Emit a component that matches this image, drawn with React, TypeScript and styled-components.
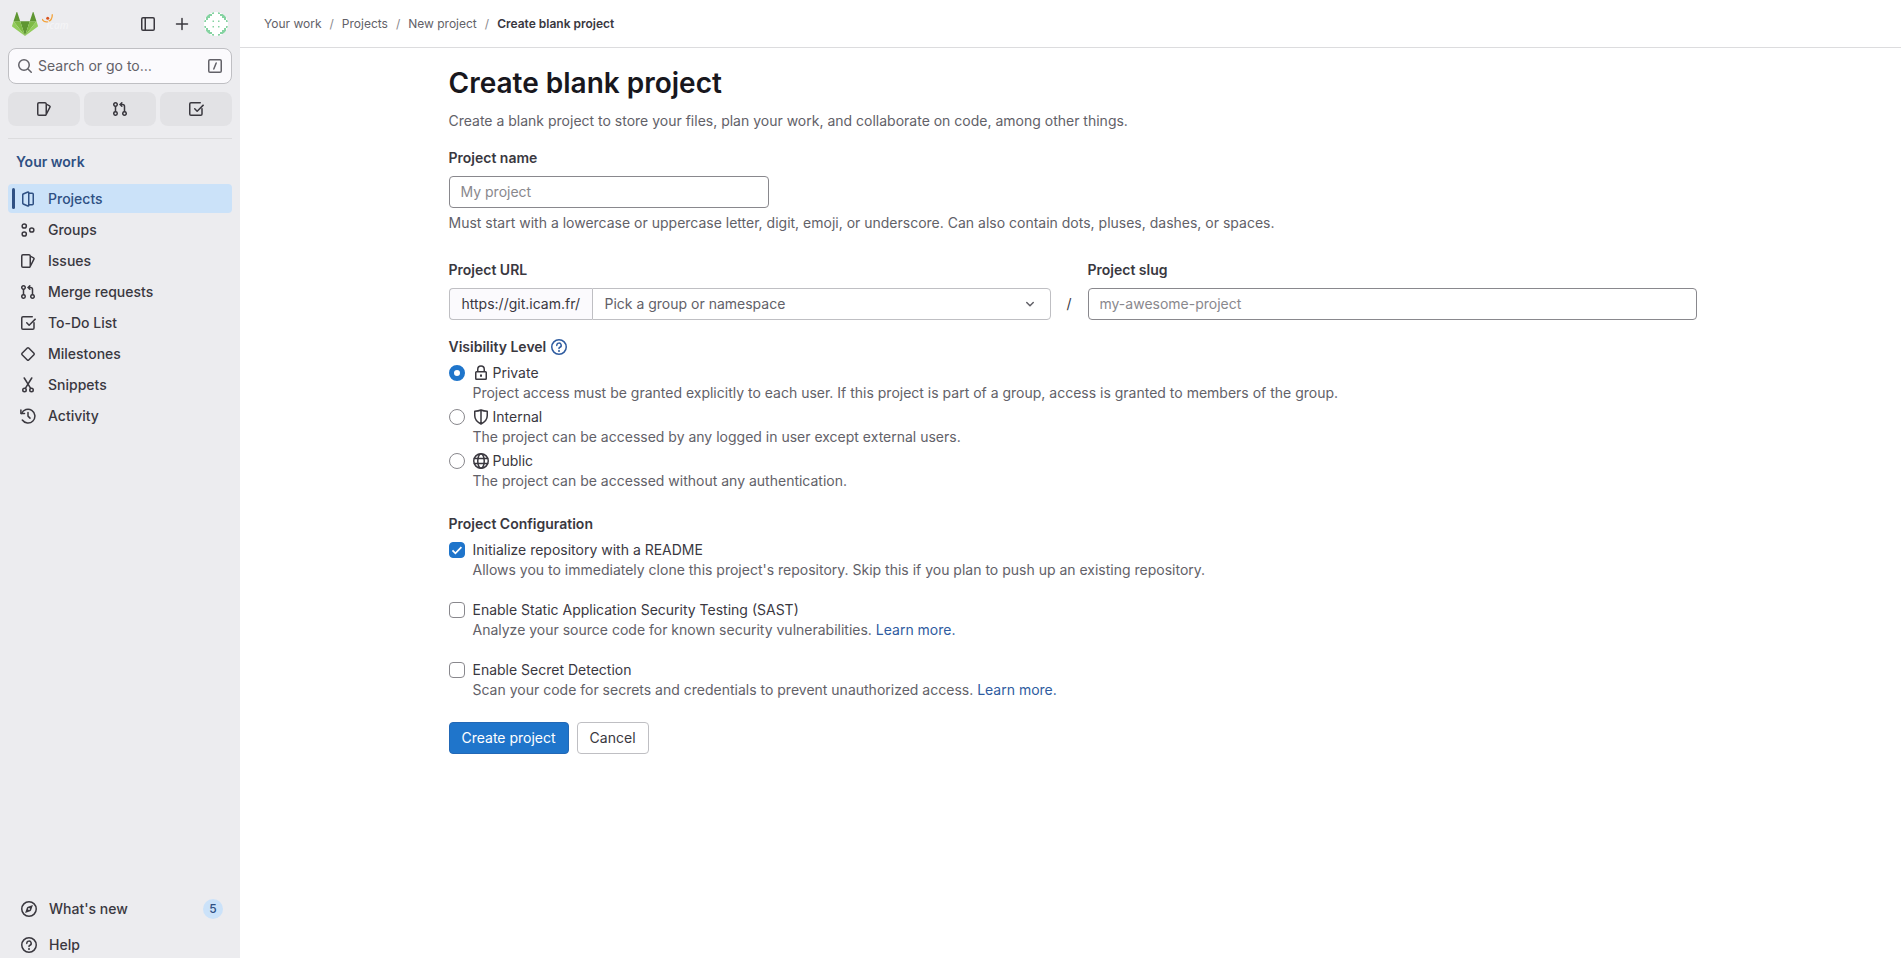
import React from 'react';
import styled, { createGlobalStyle, css } from 'styled-components';

const GlobalStyle = createGlobalStyle`
  *, *::before, *::after { box-sizing: border-box; }
  html, body { margin: 0; padding: 0; background: #fff; }
  body, button, input, select {
    font-family: Inter, "Liberation Sans", sans-serif;
    font-size: 14px;
    line-height: 20px;
    color: #3a383f;
  }
  h1, h2, p, ul, ol, fieldset { margin: 0; padding: 0; border: 0; list-style: none; }
`;

/* ---------- icons ---------- */

const Glyph = styled.svg`
  display: block;
  flex: none;
  width: 16px;
  height: 16px;
`;

const solid = (d: string) => (
  <Glyph viewBox="0 0 16 16" aria-hidden="true">
    <path d={d} fill="currentColor" fillRule="evenodd" clipRule="evenodd" />
  </Glyph>
);

const line = (children: React.ReactNode) => (
  <Glyph
    viewBox="0 0 16 16"
    fill="none"
    stroke="currentColor"
    strokeWidth="1.5"
    strokeLinecap="round"
    strokeLinejoin="round"
    aria-hidden="true"
  >
    {children}
  </Glyph>
);

const icons = {
  sidebar: line(
    <>
      <rect x="1.75" y="1.75" width="12.5" height="12.5" rx="1.25" />
      <path d="M5.25 2v12" strokeLinecap="butt" />
    </>,
  ),
  plus: line(<path d="M8 2.5v11M2.5 8h11" />),
  search: line(
    <>
      <circle cx="7" cy="7" r="5.25" />
      <path d="M11 11l3.25 3.25" />
    </>,
  ),
  slash: line(
    <>
      <rect x="1.75" y="1.75" width="12.5" height="12.5" rx="1.25" />
      <path d="M9.2 5l-2.4 6" />
    </>,
  ),
  issues: solid(
    'M3 2.5h6a.5.5 0 0 1 .5.5v10a.5.5 0 0 1-.5.5H3a.5.5 0 0 1-.5-.5V3a.5.5 0 0 1 .5-.5zM1 3a2 2 0 0 1 2-2h6a2 2 0 0 1 1.97 1.658l2.913 1.516a1.75 1.75 0 0 1 .744 2.36l-3.878 7.45a.753.753 0 0 1-.098.145c-.36.526-.965.871-1.651.871H3a2 2 0 0 1-2-2V3zm10 7.254l2.297-4.413a.25.25 0 0 0-.106-.337L11 4.364v5.89z',
  ),
  merge: solid(
    'M10.34 1.22a.75.75 0 0 0-1.06 0L7.53 2.97 7 3.5l.53.53 1.75 1.75a.75.75 0 1 0 1.06-1.06l-.47-.47h.63c.69 0 1.25.56 1.25 1.25v4.614a2.501 2.501 0 1 0 1.5 0V5.5a2.75 2.75 0 0 0-2.75-2.75h-.63l.47-.47a.75.75 0 0 0 0-1.06ZM13.5 12.5a1 1 0 1 1-2 0 1 1 0 0 1 2 0Zm-9 0a1 1 0 1 1-2 0 1 1 0 0 1 2 0Zm1.5 0a2.5 2.5 0 1 1-3.25-2.386V5.886a2.501 2.501 0 1 1 1.5 0v4.228A2.501 2.501 0 0 1 6 12.5Zm-1.5-9a1 1 0 1 1-2 0 1 1 0 0 1 2 0Z',
  ),
  todo: solid(
    'M3 13.5a.5.5 0 0 1-.5-.5V3a.5.5 0 0 1 .5-.5h9.25a.75.75 0 0 0 0-1.5H3a2 2 0 0 0-2 2v10a2 2 0 0 0 2 2h9.75a2 2 0 0 0 2-2V7.75a.75.75 0 0 0-1.5 0V13a.5.5 0 0 1-.5.5H3zm12.78-8.82a.75.75 0 0 0-1.06-1.06L9.162 9.177 7.289 7.241a.75.75 0 1 0-1.078 1.043l2.403 2.484a.75.75 0 0 0 1.07.01L15.78 4.68z',
  ),
  project: line(
    <>
      <path d="M8.75 1.6v12.8a.6.6 0 0 1-.85.54L3.2 13a.75.75 0 0 1-.45-.7V3.7c0-.3.18-.57.45-.7L7.9 1.06a.6.6 0 0 1 .85.54z" />
      <path d="M9 2.25h3.25a1 1 0 0 1 1 1v9.5a1 1 0 0 1-1 1H9" />
    </>,
  ),
  group: line(
    <>
      <circle cx="4.25" cy="4" r="2.1" />
      <circle cx="4.25" cy="12" r="2.1" />
      <circle cx="11.75" cy="8" r="2.1" />
    </>,
  ),
  milestone: line(<path d="M7.3 2.05a1 1 0 0 1 1.4 0l5.25 5.25a1 1 0 0 1 0 1.4L8.7 13.95a1 1 0 0 1-1.4 0L2.05 8.7a1 1 0 0 1 0-1.4z" />),
  snippet: line(
    <>
      <circle cx="4.5" cy="13" r="1.75" />
      <circle cx="11.5" cy="13" r="1.75" />
      <path d="M4.25 1l6.4 10.4M11.75 1L5.35 11.4" />
    </>,
  ),
  history: line(
    <>
      <path d="M1.6 5.5A6.9 6.9 0 1 1 2.3 12" />
      <path d="M.9 2v3.6h3.6M8 4.5v3.6l2 2" />
    </>,
  ),
  compass: (
    <Glyph viewBox="0 0 16 16" aria-hidden="true">
      <circle cx="8" cy="8" r="7.25" fill="none" stroke="currentColor" strokeWidth="1.5" />
      <path
        d="M11.9 4.1l-1.7 5a1.8 1.8 0 0 1-1.1 1.1l-5 1.7 1.7-5a1.8 1.8 0 0 1 1.1-1.1zM8 9a1 1 0 1 0 0-2 1 1 0 0 0 0 2z"
        fill="currentColor"
        fillRule="evenodd"
      />
    </Glyph>
  ),
  question: (
    <Glyph viewBox="0 0 16 16" fill="none" stroke="currentColor" strokeWidth="1.5" aria-hidden="true">
      <circle cx="8" cy="8" r="7.25" />
      <path d="M5.8 6.4A2.2 2.2 0 1 1 8.9 8.3c-.6.25-.9.6-.9 1.2" strokeLinecap="round" />
      <circle cx="8" cy="11.9" r="1" fill="currentColor" stroke="none" />
    </Glyph>
  ),
  lock: (
    <Glyph viewBox="0 0 16 16" fill="none" stroke="currentColor" strokeWidth="1.5" aria-hidden="true">
      <rect x="2.75" y="6.75" width="10.5" height="7.5" rx=".75" />
      <path d="M4.75 6.5V4.25a3.25 3.25 0 0 1 6.5 0V6.5" />
      <path d="M8 9.5v2.2" strokeWidth="2" />
    </Glyph>
  ),
  shield: line(<path d="M8 1.2v13.6M1.75 2.2C4 2.2 6.2 1.8 8 1c1.8.8 4 1.2 6.25 1.2v4.6c0 3.6-2.6 6.3-6.25 8.2-3.65-1.9-6.25-4.6-6.25-8.2z" />),
  earth: line(
    <>
      <circle cx="8" cy="8" r="7.25" />
      <ellipse cx="8" cy="8" rx="3.25" ry="7.25" />
      <path d="M1.4 5.5h13.2M1.4 10.5h13.2" />
    </>,
  ),
  chevron: line(<path d="M4.75 6.5L8 9.75l3.25-3.25" />),
  check: (
    <Glyph viewBox="0 0 16 16" fill="none" stroke="#fff" strokeWidth="1.75" aria-hidden="true">
      <path d="M3.5 8.4l2.9 2.9 6-6.2" />
    </Glyph>
  ),
};

type IconName = keyof typeof icons;

/* ---------- sidebar ---------- */

const Shell = styled.div`
  display: grid;
  grid-template-columns: 240px minmax(0, 1fr);
  min-height: 100vh;
`;

const Sidebar = styled.aside`
  display: flex;
  flex-direction: column;
  position: sticky;
  top: 0;
  height: 100vh;
  padding: 0 8px;
  overflow: hidden;
  background: #ececef;
`;

const BrandBar = styled.div`
  display: flex;
  align-items: center;
  gap: 2px;
  height: 48px;
  padding-left: 4px;
`;

const BrandLink = styled.a`
  display: flex;
  align-items: center;
  gap: 4px;
  margin-right: auto;
  text-decoration: none;
`;

const IconButton = styled.button`
  display: grid;
  place-items: center;
  width: 32px;
  height: 32px;
  padding: 0;
  border: 0;
  background: transparent;
  color: #3a383f;
`;

const SearchButton = styled.button`
  display: flex;
  align-items: center;
  gap: 5px;
  height: 36px;
  padding: 0 8px;
  border: 1px solid #bfbfc3;
  border-radius: 8px;
  background: #fbfafd;
  color: #626168;
  span { flex: 1; text-align: left; }
`;

const Shortcuts = styled.div`
  display: grid;
  grid-template-columns: repeat(3, 1fr);
  gap: 4px;
  padding: 8px 0 12px;
  border-bottom: 1px solid #dcdcde;
`;

const Shortcut = styled.a`
  display: grid;
  place-items: center;
  height: 34px;
  border-radius: 8px;
  background: #e2e2e5;
  color: #3a383f;
`;

const SectionTitle = styled.h2`
  padding: 13px 8px 12px;
  font-size: 14px;
  font-weight: 600;
  line-height: 20px;
  color: #2f5083;
`;

const NavList = styled.ul`
  display: flex;
  flex-direction: column;
  gap: 2px;
`;

const NavLink = styled.a<{ $active?: boolean }>`
  display: flex;
  align-items: center;
  height: 29px;
  padding: 0 4px;
  border-radius: 4px;
  font-weight: 500;
  text-decoration: none;
  color: #3a383f;
  &::before {
    content: '';
    width: 3px;
    height: 21px;
    margin-right: 5px;
    border-radius: 2px;
  }
  svg { margin-right: 12px; }
  ${(p) =>
    p.$active &&
    css`
      background: #cbe2f9;
      color: #2f5083;
      &::before { background: #2f5083; }
    `}
`;

const FooterNav = styled.ul`
  display: flex;
  flex-direction: column;
  gap: 10px;
  margin-top: auto;
`;

const FooterButton = styled.button`
  display: flex;
  align-items: center;
  gap: 12px;
  width: 100%;
  height: 26px;
  padding: 0 9px 0 13px;
  border: 0;
  background: transparent;
  font-weight: 500;
  span { flex: 1; text-align: left; }
`;

const Count = styled.b`
  display: grid;
  place-items: center;
  width: 20px;
  height: 20px;
  border-radius: 50%;
  background: #cbe2f9;
  color: #2f5083;
  font-size: 12px;
  font-weight: 500;
  line-height: 16px;
`;

/* ---------- page ---------- */

const TopBar = styled.nav`
  height: 48px;
  padding: 14px 24px;
  border-bottom: 1px solid #dcdcde;
  ol { display: flex; }
`;

const Crumb = styled.li`
  font-size: 12px;
  line-height: 20px;
  a { color: #626168; text-decoration: none; }
  a[aria-current] { color: #3a383f; font-weight: 600; }
  & + &::before { content: '/'; margin: 0 8px; color: #89888d; }
`;

const Content = styled.main`
  padding: 16px 19px 32px 23px;
`;

const Form = styled.form`
  max-width: 1248px;
  margin: 0 auto;
`;

const Title = styled.h1`
  font-size: 28px;
  line-height: 38px;
  font-weight: 600;
  color: #18171d;
`;

const Muted = styled.p`
  color: #626168;
`;

const Lead = styled(Muted)`
  margin: 9px 0 17px;
`;

const Label = styled.label`
  display: block;
  margin-bottom: 8px;
  font-weight: 600;
`;

const TextInput = styled.input<{ $width?: string }>`
  display: block;
  width: ${(p) => p.$width ?? '100%'};
  height: 32px;
  padding: 6px 11px 8px;
  border: 1px solid #89888d;
  border-radius: 4px;
  background: #fff;
  line-height: 16px;
  &::placeholder { color: #89888d; opacity: 1; }
`;

const NameHelp = styled(Muted)`
  margin: 5px 0 27px;
`;

const UrlRow = styled.div`
  display: grid;
  grid-template-columns: minmax(0, 602fr) 37px minmax(0, 609fr);
  align-items: end;
  margin-bottom: 17px;
`;

const Slash = styled.span`
  text-align: center;
  line-height: 32px;
`;

const InputGroup = styled.div`
  display: flex;
`;

const Prefix = styled.span`
  flex: none;
  width: 143px;
  height: 32px;
  padding-left: 12px;
  border: 1px solid #bfbfc3;
  border-right: 0;
  border-radius: 4px 0 0 4px;
  background: #fbfafd;
  line-height: 30px;
  white-space: nowrap;
`;

const SelectBox = styled.div`
  display: grid;
  flex: 1;
  align-items: center;
  color: #626168;
  svg { grid-area: 1 / 1; justify-self: end; margin-right: 13px; pointer-events: none; }
`;

const Select = styled.select`
  grid-area: 1 / 1;
  appearance: none;
  width: 100%;
  height: 32px;
  padding: 0 32px 0 12px;
  border: 1px solid #bfbfc3;
  border-radius: 0 4px 4px 0;
  background: #fff;
  color: #626168;
`;

const Fieldset = styled.fieldset`
  min-width: 0;
`;

const Legend = styled.legend`
  display: flex;
  align-items: center;
  gap: 5px;
  margin-bottom: 6px;
  padding: 0;
  font-weight: 600;
  a { color: #2f5ca0; }
`;

const Option = styled.div<{ $gap: number }>`
  display: grid;
  grid-template-columns: 16px minmax(0, 1fr);
  column-gap: 8px;
  align-items: center;
  margin-bottom: ${(p) => p.$gap}px;
  label { display: flex; align-items: center; gap: 4px; }
  p { grid-column: 2; }
`;

const Tick = styled.span`
  display: grid;
  svg { grid-area: 1 / 1; pointer-events: none; }
  input:not(:checked) + svg { visibility: hidden; }
`;

const choice = css`
  grid-area: 1 / 1;
  appearance: none;
  width: 16px;
  height: 16px;
  margin: 0;
  border: 1px solid #89888d;
  background: #fff;
`;

const Radio = styled.input`
  ${choice}
  border-radius: 50%;
  &:checked { border: 5px solid #1f75cb; }
`;

const Checkbox = styled.input`
  ${choice}
  border-radius: 4px;
  &:checked { background: #1f75cb; border-color: #1f75cb; }
`;

const TextLink = styled.a`
  color: #2f5ca0;
  text-decoration: none;
`;

const Actions = styled.div`
  display: flex;
  gap: 8px;
  padding-top: 2px;
`;

const Button = styled.button<{ $primary?: boolean }>`
  height: 32px;
  padding: 0 12px;
  border: 1px solid ${(p) => (p.$primary ? '#2268b6' : '#bfbfc3')};
  border-radius: 4px;
  background: ${(p) => (p.$primary ? '#1f75cb' : '#fff')};
  color: ${(p) => (p.$primary ? '#fff' : '#3a383f')};
`;

/* ---------- logos ---------- */

const Tanuki = () => (
  <svg width="26" height="24" viewBox="0 0 210 194" aria-label="GitLab">
    <path fill="#5f9632" d="M105 193.600 143.700 74.700H66.400z" />
    <path fill="#7fbb45" d="M105 193.600 66.400 74.700H12.300zM105 193.600l38.700-118.900h54.100z" />
    <path fill="#93cc5c" d="M12.300 74.700.5 110.900c-1 3.300.1 6.900 2.900 8.900L105 193.600zM197.800 74.700l11.800 36.200c1 3.300-.1 6.900-2.900 8.900L105 193.600z" />
    <path fill="#5f9632" d="M12.300 74.700h54.100L43.100 3.100c-1.200-3.700-6.400-3.700-7.600 0zM197.800 74.700h-54.100L167 3.100c1.200-3.700 6.400-3.700 7.600 0z" />
  </svg>
);

const IcamLogo = () => (
  <svg width="30" height="24" viewBox="0 0 30 24" aria-hidden="true">
    <path d="M0 7C2.500 11.500 10.500 11 10.300 2.200" fill="none" stroke="#f3a33a" strokeWidth="1.300" />
    <circle cx="5.700" cy="6.300" r="1.500" fill="#d9531e" />
    <text x="4.500" y="17" fontFamily="Open Sans" fontStyle="italic" fontWeight="600" fontSize="10" fill="#f4f4f6">
      icam
    </text>
  </svg>
);

const Identicon = () => (
  <svg width="24" height="24" viewBox="0 0 24 24" aria-label="User avatar">
    <clipPath id="avatar">
      <circle cx="12" cy="12" r="12" />
    </clipPath>
    <g clipPath="url(#avatar)">
      <rect width="24" height="24" fill="#fff" />
      <path
        fill="#86d3a2"
        d="M8 0h2v2H8zM14 0h2v2h-2zM8 22h2v2H8zM14 22h2v2h-2zM0 8h2v2H0zM0 14h2v2H0zM22 8h2v2h-2zM22 14h2v2h-2zM2 2h6v2H6v2H4v2H2zM22 2h-6v2h2v2h2v2h2zM2 22h6v-2H6v-2H4v-2H2zM22 22h-6v-2h2v-2h2v-2h2zM8.500 8.500h1.500v1.500H8.500zM14 8.500h1.500v1.500H14zM8.500 14h1.500v1.500H8.500zM14 14h1.500v1.500H14z"
      />
    </g>
  </svg>
);

/* ---------- data ---------- */

const navItems: { icon: IconName; text: string }[] = [
  { icon: 'project', text: 'Projects' },
  { icon: 'group', text: 'Groups' },
  { icon: 'issues', text: 'Issues' },
  { icon: 'merge', text: 'Merge requests' },
  { icon: 'todo', text: 'To-Do List' },
  { icon: 'milestone', text: 'Milestones' },
  { icon: 'snippet', text: 'Snippets' },
  { icon: 'history', text: 'Activity' },
];

const levels: { id: string; icon: IconName; text: string; help: string }[] = [
  {
    id: 'private',
    icon: 'lock',
    text: 'Private',
    help: 'Project access must be granted explicitly to each user. If this project is part of a group, access is granted to members of the group.',
  },
  {
    id: 'internal',
    icon: 'shield',
    text: 'Internal',
    help: 'The project can be accessed by any logged in user except external users.',
  },
  {
    id: 'public',
    icon: 'earth',
    text: 'Public',
    help: 'The project can be accessed without any authentication.',
  },
];

const settings = [
  {
    id: 'readme',
    text: 'Initialize repository with a README',
    help: "Allows you to immediately clone this project's repository. Skip this if you plan to push up an existing repository.",
    link: false,
    on: true,
  },
  {
    id: 'sast',
    text: 'Enable Static Application Security Testing (SAST)',
    help: 'Analyze your source code for known security vulnerabilities.',
    link: true,
    on: false,
  },
  {
    id: 'secrets',
    text: 'Enable Secret Detection',
    help: 'Scan your code for secrets and credentials to prevent unauthorized access.',
    link: true,
    on: false,
  },
];

const crumbs = ['Your work', 'Projects', 'New project', 'Create blank project'];

export default function App() {
  return (
    <Shell>
      <GlobalStyle />
      <Sidebar>
        <BrandBar>
          <BrandLink href="#home">
            <Tanuki />
            <IcamLogo />
          </BrandLink>
          <IconButton type="button" aria-label="Toggle sidebar">{icons.sidebar}</IconButton>
          <IconButton type="button" aria-label="Create new">{icons.plus}</IconButton>
          <IconButton type="button" aria-label="User menu"><Identicon /></IconButton>
        </BrandBar>
        <SearchButton type="button">
          {icons.search}
          <span>Search or go to…</span>
          {icons.slash}
        </SearchButton>
        <Shortcuts>
          <Shortcut href="#issues" aria-label="Assigned issues">{icons.issues}</Shortcut>
          <Shortcut href="#merge" aria-label="Merge requests">{icons.merge}</Shortcut>
          <Shortcut href="#todo" aria-label="To-Do List">{icons.todo}</Shortcut>
        </Shortcuts>
        <nav aria-label="Your work">
          <SectionTitle>Your work</SectionTitle>
          <NavList>
            {navItems.map((item, i) => (
              <li key={item.text}>
                <NavLink href={`#${item.icon}`} $active={i === 0}>
                  {icons[item.icon]}
                  {item.text}
                </NavLink>
              </li>
            ))}
          </NavList>
        </nav>
        <FooterNav>
          <li>
            <FooterButton type="button">
              {icons.compass}
              <span>What's new</span>
              <Count>5</Count>
            </FooterButton>
          </li>
          <li>
            <FooterButton type="button">
              {icons.question}
              <span>Help</span>
            </FooterButton>
          </li>
        </FooterNav>
      </Sidebar>

      <div>
        <TopBar aria-label="Breadcrumb">
          <ol>
            {crumbs.map((text, i) => (
              <Crumb key={text}>
                <a href="#crumb" aria-current={i === crumbs.length - 1 ? 'page' : undefined}>{text}</a>
              </Crumb>
            ))}
          </ol>
        </TopBar>
        <Content>
          <Form onSubmit={(e) => e.preventDefault()}>
            <Title>Create blank project</Title>
            <Lead>Create a blank project to store your files, plan your work, and collaborate on code, among other things.</Lead>

            <Label htmlFor="name">Project name</Label>
            <TextInput id="name" $width="320px" placeholder="My project" />
            <NameHelp>
              Must start with a lowercase or uppercase letter, digit, emoji, or underscore. Can also contain dots, pluses, dashes, or spaces.
            </NameHelp>

            <UrlRow>
              <div>
                <Label htmlFor="namespace">Project URL</Label>
                <InputGroup>
                  <Prefix>https://git.icam.fr/</Prefix>
                  <SelectBox>
                    <Select id="namespace">
                      <option>Pick a group or namespace</option>
                    </Select>
                    {icons.chevron}
                  </SelectBox>
                </InputGroup>
              </div>
              <Slash>/</Slash>
              <div>
                <Label htmlFor="slug">Project slug</Label>
                <TextInput id="slug" placeholder="my-awesome-project" />
              </div>
            </UrlRow>

            <Fieldset>
              <Legend>
                Visibility Level
                <a href="#visibility" aria-label="Visibility help">{icons.question}</a>
              </Legend>
              {levels.map((level, i) => (
                <Option key={level.id} $gap={i === levels.length - 1 ? 23 : 4}>
                  <Radio type="radio" name="visibility" id={level.id} defaultChecked={i === 0} />
                  <label htmlFor={level.id}>
                    {icons[level.icon]}
                    {level.text}
                  </label>
                  <Muted>{level.help}</Muted>
                </Option>
              ))}
            </Fieldset>

            <Fieldset>
              <Legend>Project Configuration</Legend>
              {settings.map((s) => (
                <Option key={s.id} $gap={20}>
                  <Tick>
                    <Checkbox type="checkbox" id={s.id} defaultChecked={s.on} />
                    {icons.check}
                  </Tick>
                  <label htmlFor={s.id}>{s.text}</label>
                  <Muted>
                    {s.help} {s.link && <TextLink href="#learn">Learn more.</TextLink>}
                  </Muted>
                </Option>
              ))}
            </Fieldset>

            <Actions>
              <Button type="submit" $primary>Create project</Button>
              <Button type="button">Cancel</Button>
            </Actions>
          </Form>
        </Content>
      </div>
    </Shell>
  );
}
